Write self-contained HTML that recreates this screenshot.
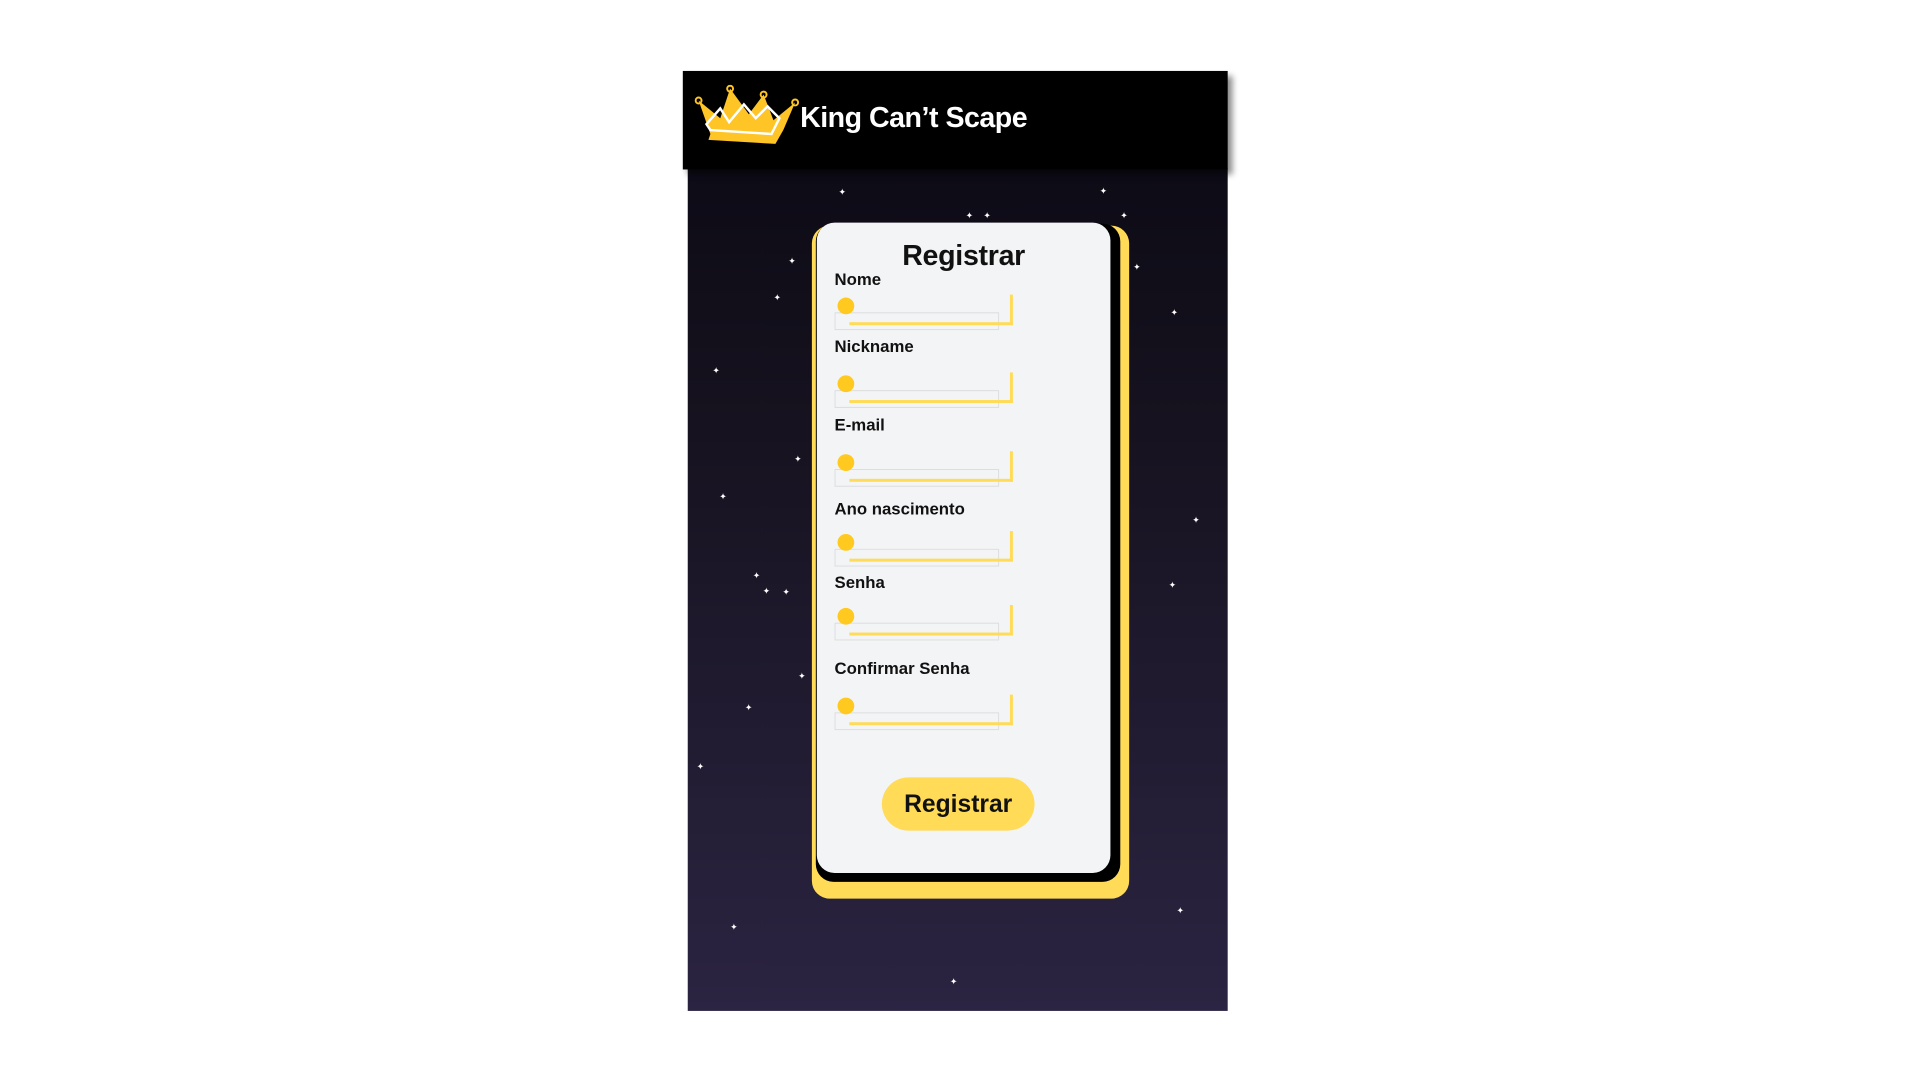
<!DOCTYPE html>
<html><head><meta charset="utf-8"><style>
*{margin:0;padding:0;box-sizing:border-box}
body{width:1920px;height:1080px;background:#fff;position:relative;overflow:hidden;font-family:"Liberation Sans",sans-serif}
#w{position:absolute;left:0;top:0;width:1920px;height:1080px;transform:scale(0.9853);transform-origin:0 0}
.bg{position:absolute;left:698px;top:171px;width:548px;height:855px;background:linear-gradient(#0d0b16,#16121f 30%,#2b2442)}
.hdr{position:absolute;left:693px;top:72px;width:553px;height:100px;background:#000;box-shadow:5px 5px 6px rgba(0,0,0,.45)}
.hdr span{position:absolute;left:119px;top:32px;color:#fff;font-weight:bold;font-size:29px;letter-spacing:-0.5px}
.s{position:absolute;color:#fff;font-size:9px;line-height:9px}
.y{position:absolute;left:824px;top:229px;width:322px;height:683px;background:#ffdb58;border-radius:18px}
.k{position:absolute;left:828px;top:227px;width:309px;height:668px;background:#000;border-radius:18px}
.c{position:absolute;left:829px;top:226px;width:298px;height:660px;background:#f3f4f6;border-radius:18px}
.t{position:absolute;left:829px;width:298px;text-align:center;top:244px;font-weight:bold;font-size:29px;color:#111;letter-spacing:-0.3px}
.l{position:absolute;left:847px;font-weight:bold;font-size:17px;color:#111}
.in{position:absolute;left:847px;width:185px;height:40px}
.in .g{position:absolute;left:0;top:18px;width:167px;height:18px;border:1.5px solid #ddd}
.in .ln{position:absolute;left:15px;top:0;width:166px;height:31px;border-right:3px solid #ffdb58;border-bottom:3px solid #ffdb58}
.in .d{position:absolute;left:3px;top:3px;width:17px;height:17px;border-radius:50%;background:#ffc91f}
.btn{position:absolute;left:895px;top:789px;width:155px;height:54px;border-radius:27px;background:#ffdb58;text-align:center;line-height:54px;font-weight:bold;font-size:25px;color:#111}
</style></head><body><div id="w">
<div class="bg"></div>
<div class="s" style="left:851px;top:191px">✦</div>
<div class="s" style="left:1116px;top:190px">✦</div>
<div class="s" style="left:998px;top:215px">✦</div>
<div class="s" style="left:980px;top:215px">✦</div>
<div class="s" style="left:1137px;top:215px">✦</div>
<div class="s" style="left:800px;top:261px">✦</div>
<div class="s" style="left:1150px;top:267px">✦</div>
<div class="s" style="left:785px;top:298px">✦</div>
<div class="s" style="left:1188px;top:313px">✦</div>
<div class="s" style="left:723px;top:372px">✦</div>
<div class="s" style="left:806px;top:462px">✦</div>
<div class="s" style="left:730px;top:500px">✦</div>
<div class="s" style="left:1210px;top:524px">✦</div>
<div class="s" style="left:764px;top:580px">✦</div>
<div class="s" style="left:774px;top:596px">✦</div>
<div class="s" style="left:794px;top:597px">✦</div>
<div class="s" style="left:1186px;top:590px">✦</div>
<div class="s" style="left:810px;top:682px">✦</div>
<div class="s" style="left:756px;top:714px">✦</div>
<div class="s" style="left:707px;top:774px">✦</div>
<div class="s" style="left:741px;top:937px">✦</div>
<div class="s" style="left:1194px;top:920px">✦</div>
<div class="s" style="left:964px;top:992px">✦</div>
<div class="hdr">
<svg style="position:absolute;left:12px;top:14px" width="106" height="62" viewBox="0 0 106 62">
<path d="M4 16 L16 50 L14 56 L82 60 L90 46 L102 18 L80 36 L70 10 L55 30 L36 4 L26 34 Z" fill="#ffc526"/>
<path d="M12 40 L26 24 L35 38 L50 20 L62 34 L74 22 L86 34 L78 50 L16 46 Z" fill="none" stroke="#fff" stroke-width="2.5"/>
<circle cx="4" cy="16" r="3" fill="none" stroke="#ffc526" stroke-width="2"/>
<circle cx="36" cy="4" r="3" fill="none" stroke="#ffc526" stroke-width="2"/>
<circle cx="70" cy="10" r="3" fill="none" stroke="#ffc526" stroke-width="2"/>
<circle cx="102" cy="18" r="3" fill="none" stroke="#ffc526" stroke-width="2"/>
</svg>
<span>King Can’t Scape</span></div>
<div class="y"></div><div class="k"></div><div class="c"></div>
<div class="t">Registrar</div>
<div class="l" style="top:274px">Nome</div>
<div class="in" style="top:299px"><div class="g"></div><div class="ln"></div><div class="d"></div></div>
<div class="l" style="top:342px">Nickname</div>
<div class="in" style="top:378px"><div class="g"></div><div class="ln"></div><div class="d"></div></div>
<div class="l" style="top:422px">E-mail</div>
<div class="in" style="top:458px"><div class="g"></div><div class="ln"></div><div class="d"></div></div>
<div class="l" style="top:507px">Ano nascimento</div>
<div class="in" style="top:539px"><div class="g"></div><div class="ln"></div><div class="d"></div></div>
<div class="l" style="top:582px">Senha</div>
<div class="in" style="top:614px"><div class="g"></div><div class="ln"></div><div class="d"></div></div>
<div class="l" style="top:669px">Confirmar Senha</div>
<div class="in" style="top:705px"><div class="g"></div><div class="ln"></div><div class="d"></div></div>
<div class="btn">Registrar</div>
</div></body></html>
